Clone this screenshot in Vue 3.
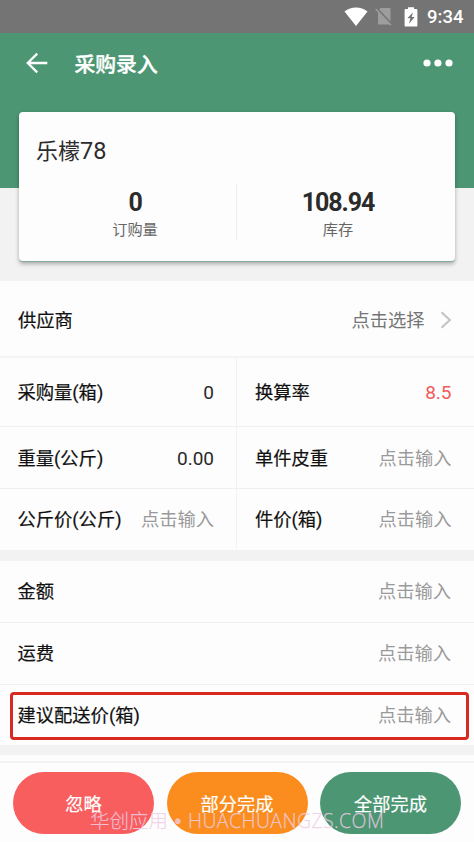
<script setup>
const stats = [
  { value: '0', label: '订购量' },
  { value: '108.94', label: '库存' },
]
const pairs = [
  [
    { label: '采购量(箱)', value: '0', kind: 'filled' },
    { label: '换算率', value: '8.5', kind: 'rate' },
  ],
  [
    { label: '重量(公斤)', value: '0.00', kind: 'filled' },
    { label: '单件皮重', value: '点击输入', kind: 'hint' },
  ],
  [
    { label: '公斤价(公斤)', value: '点击输入', kind: 'hint' },
    { label: '件价(箱)', value: '点击输入', kind: 'hint' },
  ],
]
const singles = [
  { label: '金额' },
  { label: '运费' },
  { label: '建议配送价(箱)', marked: true },
]
const actions = [
  { label: '忽略', tone: 'red' },
  { label: '部分完成', tone: 'orange' },
  { label: '全部完成', tone: 'green' },
]
</script>

<template>
  <div class="screen">
    <div class="status">
      <svg class="wifi" width="24" height="20" viewBox="0 0 24 20"><path d="M0.5 4.6C7 -0.9 17 -0.9 23.5 4.6L12 19Z" fill="#fff" /></svg>
      <svg class="sim" width="18" height="19" viewBox="0 0 18 19">
        <path d="M3 3.4 5.6 1H15.5V17.5H3Z" fill="#9d9d9d" />
        <path d="M1.5 1.2 17 17.7" stroke="#747474" stroke-width="2.4" />
        <path d="M0.7 2 16 18.3" stroke="#9d9d9d" stroke-width="1.5" />
      </svg>
      <svg class="battery" width="14" height="20" viewBox="0 0 14 20">
        <path d="M4 0.3H10V2H12.2Q13.4 2 13.4 3.2V18.4Q13.4 19.6 12.2 19.6H1.8Q0.6 19.6 0.6 18.4V3.2Q0.6 2 1.8 2H4Z" fill="#fff" />
        <path d="M9 5.3 3.4 11.3H6.4L5 16.7 10.7 9.9H7.7Z" fill="#747474" />
      </svg>
      <span class="clock">9:34</span>
    </div>

    <div class="hero">
      <header class="bar">
        <svg class="back" width="24" height="24" viewBox="0 0 24 24" fill="none" stroke="#fff" stroke-width="2.3">
          <path d="M22.3 12H3M12.2 2.6 2.8 12 12.2 21.4" />
        </svg>
        <h1>采购录入</h1>
        <svg class="more" width="30" height="8" viewBox="0 0 30 8" fill="#fff">
          <circle cx="4" cy="4" r="3.6" /><circle cx="14.9" cy="4" r="3.6" /><circle cx="26" cy="4" r="3.6" />
        </svg>
      </header>
      <section class="card">
        <div class="name">乐檬<span>78</span></div>
        <div class="stats">
          <div v-for="s in stats" :key="s.label" class="stat">
            <strong>{{ s.value }}</strong>
            <span>{{ s.label }}</span>
          </div>
        </div>
      </section>
    </div>

    <div class="row supplier">
      <span class="label">供应商</span>
      <span class="value choose">点击选择</span>
      <svg width="12" height="18" viewBox="0 0 12 18" fill="none" stroke="#c4c4c4" stroke-width="2.2"><path d="M1.5 1.3 9.8 9 1.5 16.7" /></svg>
    </div>

    <div class="pairs">
      <div v-for="(pair, i) in pairs" :key="i" class="pair">
        <div v-for="f in pair" :key="f.label" class="cell">
          <span class="label">{{ f.label }}</span>
          <span class="value" :class="f.kind">{{ f.value }}</span>
        </div>
      </div>
    </div>

    <div class="gap"></div>

    <div v-for="f in singles" :key="f.label" class="row single" :class="{ marked: f.marked }">
      <span class="label">{{ f.label }}</span>
      <span class="value hint">点击输入</span>
    </div>

    <div class="gap last"></div>

    <footer class="footer">
      <button v-for="a in actions" :key="a.label" :class="a.tone">{{ a.label }}</button>
      <div class="watermark"><span class="cn">华创应用</span><span class="dot">•</span><span class="site">HUACHUANGZS.COM</span></div>
    </footer>
  </div>
</template>

<style>
body { margin: 0; background: #fdfdfd; }
</style>

<style scoped>
* { box-sizing: border-box; }
.screen {
  width: 474px;
  height: 842px;
  overflow: hidden;
  display: flex;
  flex-direction: column;
  background: #fdfdfd;
  font-family: Roboto, "Noto Sans CJK SC", sans-serif;
  color: #111;
}
.screen > * { flex-shrink: 0; }
.status {
  height: 33px;
  padding: 0 10px 0 0;
  background: #747474;
  display: flex;
  justify-content: flex-end;
  align-items: center;
}
.sim { margin-left: 7px; }
.battery { margin-left: 11px; }
.clock { margin-left: 9px; font-size: 18.5px; font-weight: 500; color: #fff; line-height: 33px; width: 37px; padding-top: 1px; }
.hero {
  height: 248px;
  background: linear-gradient(#4c9673 0 155px, #f2f2f2 155px);
  padding: 0 19px;
}
.bar { height: 79px; display: flex; align-items: center; padding: 0 2px 19px 6px; }
.bar h1 { margin: 3px 0 0 25.5px; font-size: 20.8px; font-weight: 500; line-height: 30px; color: #fff; flex: 1; -webkit-text-stroke: 0.35px #fff; }
.card {
  height: 150px;
  background: #fdfdfd;
  border-radius: 4px;
  border-bottom: 1px solid #7eab98;
  box-shadow: 0 2px 4px rgba(0, 0, 0, 0.3);
  padding: 23px 0 0;
}
.name { padding-left: 17px; font-size: 22px; line-height: 33px; color: #2c2c2c; }
.name span { font-size: 23.5px; }
.stats { display: flex; margin-top: 16px; height: 56px; }
.stat { flex: none; width: 218px; display: flex; flex-direction: column; align-items: center; }
.stat:first-child { padding-left: 15px; border-right: 1px solid #eee; }
.stat:last-child { padding-right: 16px; }
.stat strong { font-size: 25px; line-height: 37px; font-weight: 700; color: #2b2b2b; letter-spacing: -1.1px; }
.stat span { font-size: 15.2px; line-height: 18px; color: #666; }
.label, .value { font-size: 18.3px; line-height: 27px; white-space: nowrap; }
.label { color: #111; -webkit-text-stroke: 0.2px #111; }
.value { margin-left: auto; }
.row { display: flex; align-items: center; padding: 0 23px 0 17.5px; border-bottom: 1px solid #f0f0f0; }
.supplier { height: 77px; border-bottom: 2px solid #f4f4f4; padding: 3px 22.5px 0 18px; }
.supplier svg { margin-left: 15px; }
.choose { color: #757575; }
.pair { display: grid; grid-template-columns: 237px 237px; height: 62px; border-bottom: 1px solid #f0f0f0; }
.pair:first-child { height: 69px; }
.pair:last-child { height: 60px; border-bottom: 0; }
.cell { display: flex; align-items: center; padding: 1px 22px 0 17.5px; }
.cell:nth-child(2) { padding: 1px 22.5px 0 18px; }
.cell:first-child { border-right: 1px solid #f2f2f2; }
.filled { color: #2a2a2a; font-size: 19px; }
.rate { color: #f25b59; font-size: 19px; }
.hint { color: #9a9a9a; }
.gap { height: 11px; margin-top: 1px; background: #f2f2f2; }
.gap.last { height: 10px; margin-top: 0; }
.single { height: 62px; }
.single.marked {
  height: 48px;
  margin: 6.5px 5px 5.5px 10px;
  padding: 0 15px 0 4.5px;
  border: 3px solid #d82a20;
  border-radius: 4px;
}
.footer {
  position: relative;
  flex: 1;
  margin-top: 6px;
  border-top: 2px solid #f3f3f3;
  padding: 9px 13px 8px;
  display: grid;
  align-items: start;
  grid-template-columns: 141px 141px 141px;
  gap: 12.5px;
}
button {
  height: 62px;
  border: 0;
  border-radius: 31px;
  padding: 2px 0 0;
  font: 400 18.2px/27px Roboto, "Noto Sans CJK SC", sans-serif;
  -webkit-text-stroke: 0.2px #fff;
  color: #fff;
}
.red { background: #f95e5e; }
.orange { background: #fa8d1e; }
.green { background: #4c9673; }
.watermark {
  position: absolute;
  left: 90px;
  top: 44px;
  display: flex;
  font-family: "Open Sans", "Noto Sans CJK SC", sans-serif;
  font-weight: 300;
  font-size: 19.5px;
  line-height: 28px;
  white-space: nowrap;
  color: rgba(240, 205, 228, 0.8);
  -webkit-text-stroke: 0.25px rgba(240, 205, 228, 0.8);
}
.dot { width: 20px; text-align: center; font-family: "Liberation Sans", sans-serif; }
.site { letter-spacing: 0.4px; }
</style>
